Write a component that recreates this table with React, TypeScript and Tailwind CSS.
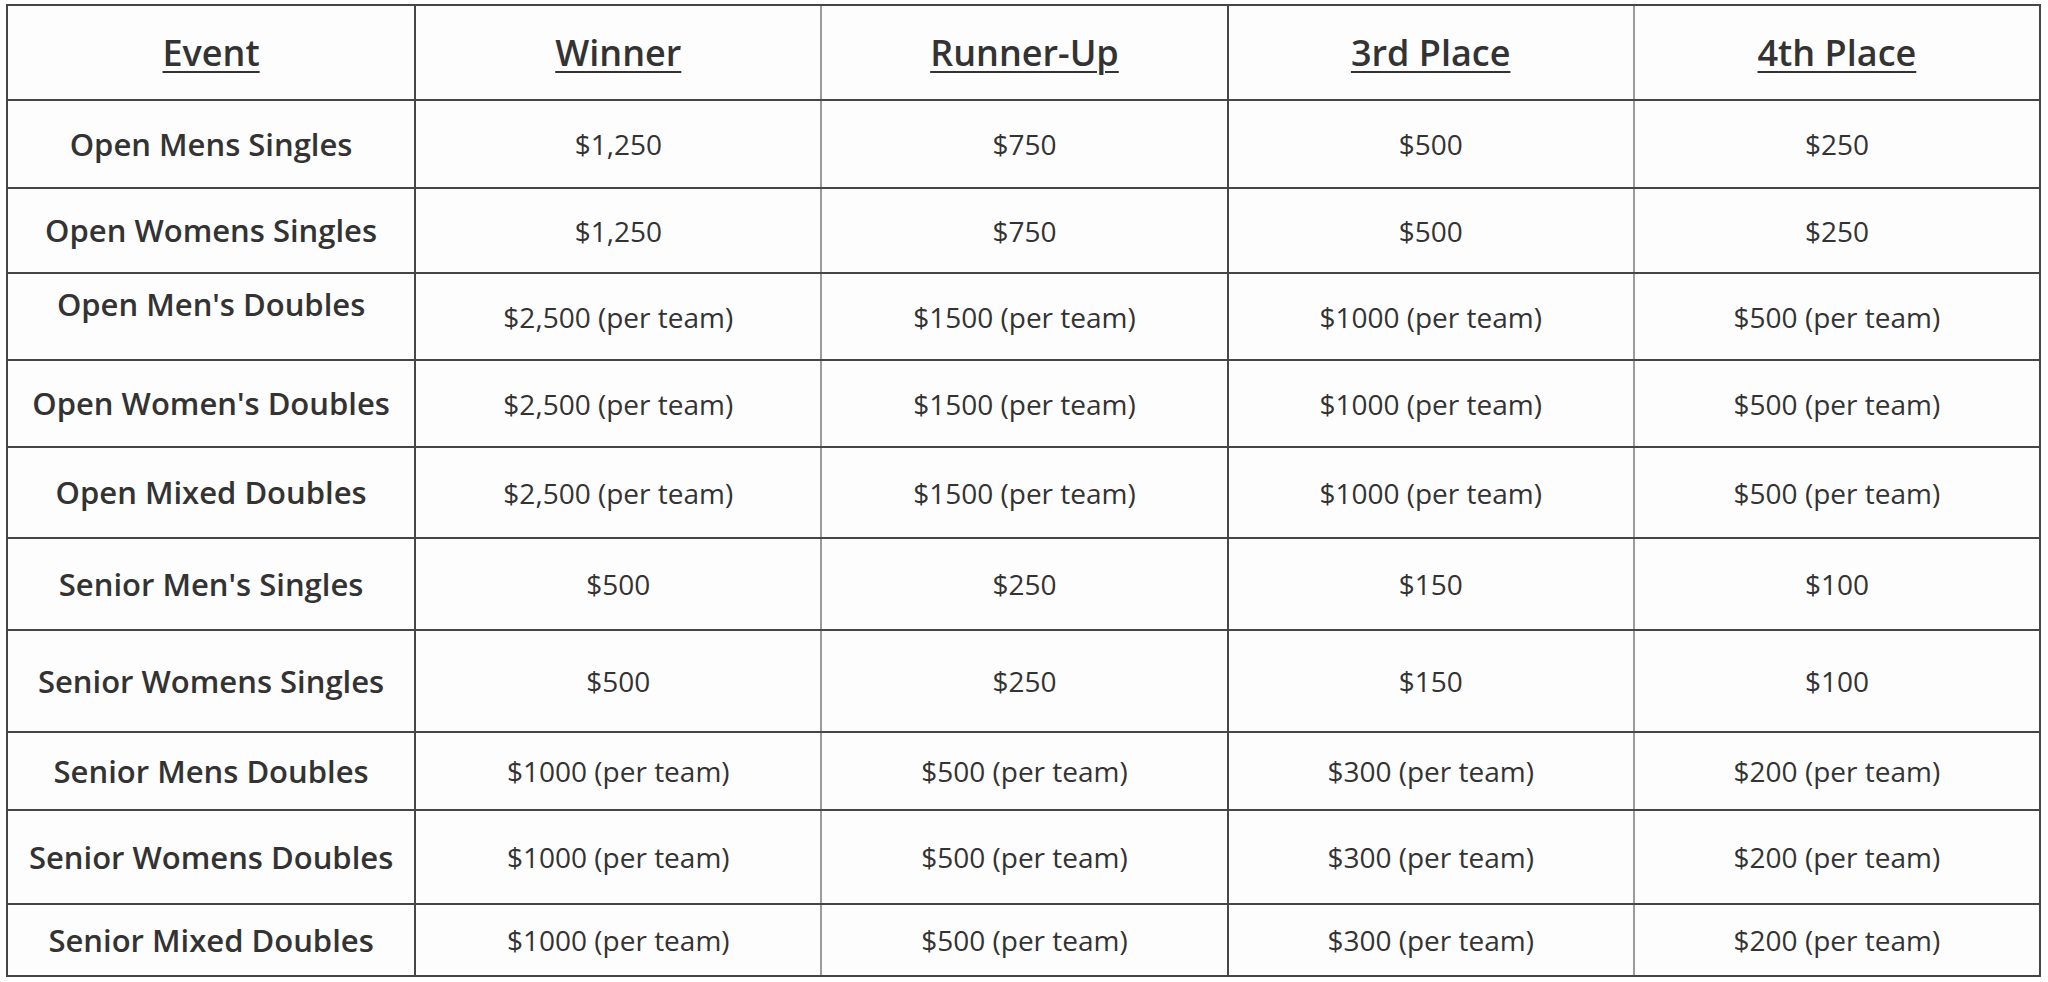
import React from 'react';

type Row = {
  event: string;
  prizes: [string, string, string, string];
  height: string;
  /** Cell text sits a little high in this row in the source table. */
  raised?: boolean;
};

const rows: Row[] = [
  { event: 'Open Mens Singles', prizes: ['$1,250', '$750', '$500', '$250'], height: 'h-[88px]' },
  { event: 'Open Womens Singles', prizes: ['$1,250', '$750', '$500', '$250'], height: 'h-[85px]' },
  {
    event: "Open Men's Doubles",
    prizes: ['$2,500 (per team)', '$1500 (per team)', '$1000 (per team)', '$500 (per team)'],
    height: 'h-[87px]',
    raised: true,
  },
  {
    event: "Open Women's Doubles",
    prizes: ['$2,500 (per team)', '$1500 (per team)', '$1000 (per team)', '$500 (per team)'],
    height: 'h-[87px]',
  },
  {
    event: 'Open Mixed Doubles',
    prizes: ['$2,500 (per team)', '$1500 (per team)', '$1000 (per team)', '$500 (per team)'],
    height: 'h-[91px]',
  },
  { event: "Senior Men's Singles", prizes: ['$500', '$250', '$150', '$100'], height: 'h-[92px]' },
  { event: 'Senior Womens Singles', prizes: ['$500', '$250', '$150', '$100'], height: 'h-[102px]' },
  {
    event: 'Senior Mens Doubles',
    prizes: ['$1000 (per team)', '$500 (per team)', '$300 (per team)', '$200 (per team)'],
    height: 'h-[78px]',
  },
  {
    event: 'Senior Womens Doubles',
    prizes: ['$1000 (per team)', '$500 (per team)', '$300 (per team)', '$200 (per team)'],
    height: 'h-[94px]',
  },
  {
    event: 'Senior Mixed Doubles',
    prizes: ['$1000 (per team)', '$500 (per team)', '$300 (per team)', '$200 (per team)'],
    height: 'h-[72px]',
  },
];

const headers = ['Event', 'Winner', 'Runner-Up', '3rd Place', '4th Place'];

// Alternate column rules render softer in the source (fractional positions), so mirror that.
const colBorder = ['', 'border-l-2 border-[#474747]', 'border-l-2 border-[#9c9c9c]', 'border-l-2 border-[#474747]', 'border-l-2 border-[#9c9c9c]'];

export default function App() {
  return (
    <div
      className="min-h-screen bg-white pl-[6px] pt-[4px] text-[#333333]"
      style={{ fontFamily: '"Open Sans", "Noto Sans", Arial, sans-serif' }}
    >
      <div className="w-[2035px] border-2 border-[#454545] bg-[#fdfdfd]">
        <div className="grid h-[93px] grid-cols-5">
          {headers.map((h, i) => (
            <div key={h} className={`flex items-center justify-center ${colBorder[i]}`}>
              <span className="text-[36px] font-semibold underline decoration-2 underline-offset-[5px]">{h}</span>
            </div>
          ))}
        </div>
        {rows.map((row) => (
          <div key={row.event} className={`grid grid-cols-5 border-t-2 border-[#454545] ${row.height}`}>
            <div className={`flex items-center justify-center ${row.raised ? 'pb-6' : ''}`}>
              <span className="text-[31px] font-semibold">{row.event}</span>
            </div>
            {row.prizes.map((p, i) => (
              <div key={i} className={`flex items-center justify-center ${colBorder[i + 1]}`}>
                <span className="text-[28px]">{p}</span>
              </div>
            ))}
          </div>
        ))}
      </div>
    </div>
  );
}
